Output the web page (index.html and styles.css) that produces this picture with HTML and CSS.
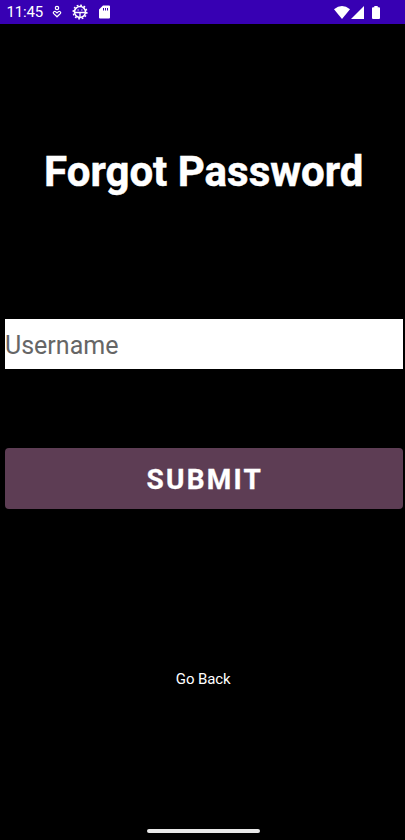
FILE: index.html
```html
<!DOCTYPE html>
<html lang="en">
<head>
<meta charset="utf-8">
<title>Forgot Password</title>
<link rel="stylesheet" href="styles.css">
</head>
<body>
<header class="status">
  <span class="clock">11:45</span>
  <svg class="person" width="10" height="14" viewBox="0 0 10 14" fill="none" stroke="#fff" stroke-width="1.2"><circle cx="5" cy="3" r="1.7"/><path d="M5 11.8 1.5 8.4C.6 7 2.6 5.6 3.8 6.8L5 8l1.200-1.200C7.400 5.600 9.400 7 8.500 8.400Z"/></svg>
  <svg class="gear" width="16" height="16" viewBox="0 0 16 16" fill="none" stroke="#fff"><circle cx="8" cy="8" r="5.500" stroke-width="1.500"/><circle cx="8" cy="8" r="6.800" stroke-width="1.500" stroke-dasharray="1.780 1.780"/><path d="M3 8.500h10M8 8.500v4.500" stroke-width="1.300"/><path d="M5.500 6h1.300M9.200 6h1.300" stroke-width="1"/></svg>
  <svg class="card" width="11" height="14" viewBox="0 0 11 14"><path fill="#fff" fill-rule="evenodd" d="M4 .5h6q1 0 1 1v11q0 1-1 1H1q-1 0-1-1v-8ZM4 3v2.500h1V3Zm2 0v2.500h1V3Zm2 0v2.500h1V3Z"/></svg>
  <span class="space"></span>
  <svg class="wifi" width="16" height="13" viewBox="0 0 16 13"><path fill="#fff" d="M0 3.300Q8-3.200 16 3.300L8 13Z"/></svg>
  <svg class="signal" width="13" height="13" viewBox="0 0 13 13"><path fill="#fff" d="M13 0v13H0Z"/></svg>
  <svg class="battery" width="8" height="13" viewBox="0 0 8 13"><path fill="#fff" d="M2.300 0h3.400v1.300H7q1 0 1 1V12q0 1-1 1H1q-1 0-1-1V2.300q0-1 1-1h1.300Z"/></svg>
</header>
<main class="page">
  <h1 class="title">Forgot Password</h1>
  <input class="field" type="text" placeholder="Username" aria-label="Username">
  <button class="submit" type="button">SUBMIT</button>
  <a class="back">Go Back</a>
</main>
<footer class="nav"><div class="handle"></div></footer>
</body>
</html>
```
FILE: styles.css
```css
* { box-sizing: border-box; }
body {
  margin: 0;
  height: 840px;
  display: flex;
  flex-direction: column;
  overflow: hidden;
  background: #000;
  color: #fff;
  font-family: Roboto, sans-serif;
}
.status {
  height: 24px;
  flex: none;
  display: flex;
  align-items: center;
  padding: 0 25px 0 6.5px;
  background: #3700b3;
}
.status svg { flex: none; display: block; }
.clock { width: 45.5px; font-size: 15px; line-height: 24px; letter-spacing: -0.15px; }
.gear { margin-left: 10px; }
.card { margin-left: 10.5px; }
.space { flex: 1; }
.signal { margin-left: 1px; }
.battery { margin-left: 8px; }
.page {
  flex: 1;
  display: flex;
  flex-direction: column;
  padding: 0 2.5px 0 5px;
}
.title {
  margin: 123px 0 0;
  font-size: 42px;
  line-height: 50px;
  font-weight: 700;
  text-align: center;
  white-space: nowrap;
  -webkit-text-stroke: 0.5px #fff;
}
.field {
  width: 100%;
  height: 50px;
  margin: 122px 0 0;
  padding: 2px 0 0;
  border: 0;
  border-radius: 0;
  outline: 0;
  background: #fff;
  color: #000;
  font: 25px Roboto, sans-serif;
}
.field::placeholder { color: #666; opacity: 1; }
.submit {
  height: 61px;
  margin: 79px 0 0;
  padding: 2px 0 0 2px;
  border: 0;
  border-radius: 4px;
  background: #5d3d54;
  color: #fff;
  font: 700 28px Roboto, sans-serif;
  letter-spacing: 2.2px;
  -webkit-text-stroke: 0.3px #fff;
}
.back {
  margin-top: 160px;
  padding-right: 1px;
  font-size: 15px;
  line-height: 20px;
  letter-spacing: -0.1px;
  text-align: center;
}
.nav {
  height: 11px;
  flex: none;
  display: flex;
  justify-content: center;
}
.handle {
  width: 113px;
  height: 4px;
  margin-left: 1px;
  border-radius: 2px;
  background: #e8e8e8;
}
```
